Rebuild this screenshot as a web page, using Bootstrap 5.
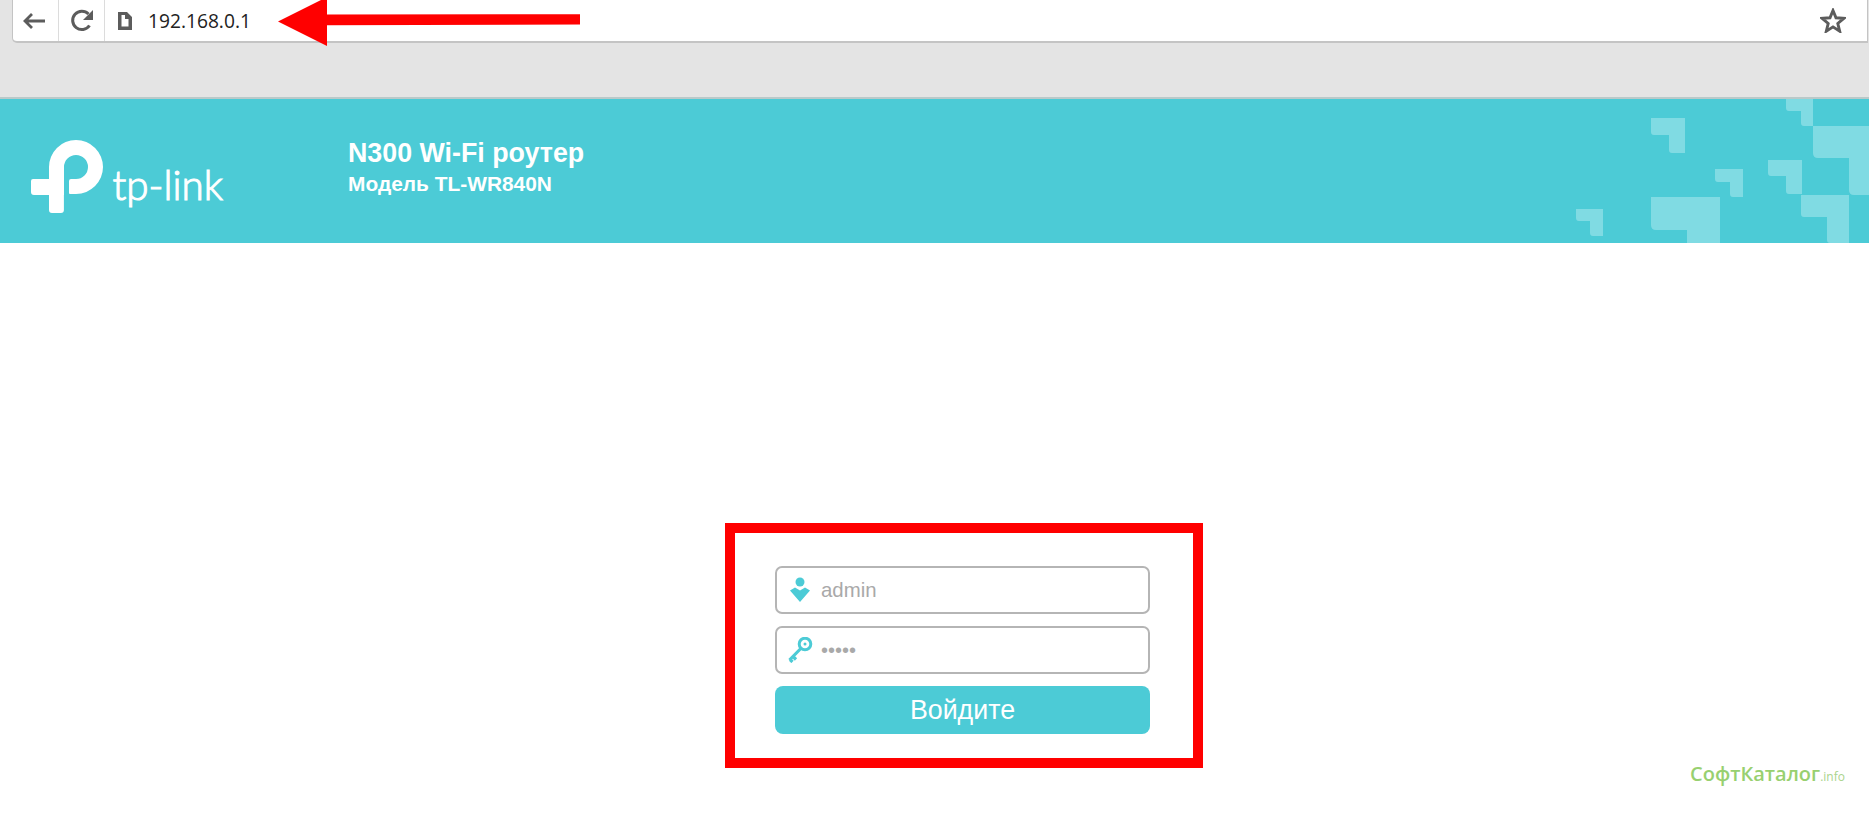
<!DOCTYPE html>
<html lang="ru">
<head>
<meta charset="utf-8">
<title>TP-Link</title>
<link href="https://cdn.jsdelivr.net/npm/bootstrap@5.3.0/dist/css/bootstrap.min.css" rel="stylesheet">
<style>
html,body{height:816px;overflow:hidden;background:#fff;font-family:"Liberation Sans",Arial,sans-serif}
.chrome-band{height:99px;background:#e4e4e4;border-bottom:2px solid #b9c9c9;padding-left:12px;padding-right:1px}
.addr-bar{height:43px;background:#fff;border:1px solid #c4c4c4;border-width:0 1px 2px 1px;border-radius:0 0 0 5px}
.tool-cell{width:46px;border-right:1px solid #dcdcdc}
.tool-cell svg{display:block}
.tool-back svg{margin-right:4px}
.addr-text{font-family:"Open Sans",sans-serif;font-size:19.2px;color:#222;margin-left:16px;line-height:41px}
.file-ico{margin-left:13px}
.star-ico{margin-right:21px}
.router-head{height:144px;background:#4ccbd6;color:#fff}
.head-pattern{position:absolute;right:0;top:0}
.brand-wrap{width:348px;padding-left:31px;padding-top:41px}
.brand-word{font-family:Lato,sans-serif;font-weight:300;font-size:40.4px;line-height:48px;margin-left:9.500px;margin-top:21px;-webkit-text-stroke:1.1px #fff}
.model-name{font-size:26.8px;font-weight:700;line-height:32px;margin-top:38px}
.model-sub{font-size:20.9px;font-weight:700;line-height:28px;margin-top:1px}
.red-frame{width:478px;height:245px;margin:280px 0 0 725px;border:10px solid #f00;padding:33px 40px 0 40px}
.field-box{width:375px;height:48px;border:2px solid #b5b5b5;border-radius:7px;margin-bottom:12px;color:#a9a9a9;font-size:20.4px;line-height:1}
.field-ico{width:44px;flex:none;padding-left:11px}
.dots-txt{font-size:20px}
.login-btn{width:375px;height:48px;background:#4ccbd6;border:0;border-radius:8px;color:#fff;font-size:26.8px;line-height:48px;padding:0}
.login-btn:hover{background:#4ccbd6;color:#fff}
.red-arrow{position:absolute;left:270px;top:0}
.soft-mark{position:absolute;left:1690px;top:760px;color:#98d070;font-family:"Open Sans",sans-serif;font-weight:600;font-size:20px;line-height:28px;white-space:nowrap}
.soft-mark small{font-size:12px;font-weight:400;color:#a9d48c}
</style>
</head>
<body class="position-relative">
<div class="chrome-band">
  <div class="addr-bar d-flex align-items-center">
    <div class="tool-cell tool-back h-100 d-flex align-items-center justify-content-center">
      <svg width="24" height="18" viewBox="0 0 24 18"><path d="M23 9H3M10 2 3 9l7 7" fill="none" stroke="#5c5c5c" stroke-width="2.8"/></svg>
    </div>
    <div class="tool-cell h-100 d-flex align-items-center justify-content-center">
      <svg width="24" height="24" viewBox="0 0 24 24"><path d="M19.5 16.5A9.2 9.2 0 1 1 18.5 5" fill="none" stroke="#5c5c5c" stroke-width="3"/><path d="M23 1v10h-10z" fill="#5c5c5c"/></svg>
    </div>
    <svg class="file-ico" width="14" height="18" viewBox="0 0 14 18"><path fill-rule="evenodd" d="M0 0h9l5 5v13H0zM3.5 7v7.5h7V7H7V3H3.500z" fill="#5c5c5c"/></svg>
    <span class="addr-text">192.168.0.1</span>
    <svg class="star-ico ms-auto" width="26" height="25" viewBox="0 0 26 25"><path d="M13 2.500l3 7.300 7.800.600-6 5.100 1.900 7.700L13 18.900 6.300 23.200l1.900-7.700-6-5.100 7.800-.600z" fill="none" stroke="#5c5c5c" stroke-width="2.900"/></svg>
  </div>
</div>

<header class="router-head position-relative d-flex">
  <svg class="head-pattern" width="293" height="144" viewBox="1576 99 293 144" fill="#80dbe3">
    <path d="M1786 99h27v27h-9q-3 0-3-3v-12h-12q-3 0-3-3z"/>
    <path d="M1813 126h56v69h-15q-5 0-5-5v-32h-31q-5 0-5-5z"/>
    <path d="M1651 118h34v35h-13q-3 0-3-3v-15h-15q-3 0-3-3z"/>
    <path d="M1768 160h34v34h-13q-3 0-3-3v-15h-15q-3 0-3-3z"/>
    <path d="M1715 169h28v28h-10q-3 0-3-3v-12h-12q-3 0-3-3z"/>
    <path d="M1801 195h48v48h-19q-3 0-3-3v-23h-23q-3 0-3-3z"/>
    <path d="M1651 197h69v46h-33v-13h-31q-5 0-5-5z"/>
    <path d="M1576 209h27v27h-10q-3 0-3-3v-12h-11q-3 0-3-3z"/>
  </svg>
  <div class="brand-wrap d-flex flex-none">
    <svg width="72" height="73" viewBox="0 0 72 73" class="flex-shrink-0"><path fill="#fff" d="M18 27A27 27 0 1 1 45 54h-6a1 1 0 0 1-1-1V41a2 2 0 0 1 2-2h5a12 12 0 1 0-12-12v28h-.1v15a3 3 0 0 1-3 3H21a3 3 0 0 1-3-3V55H3a3 3 0 0 1-3-3V41a2 2 0 0 1 2-2h16z"/></svg>
    <div class="brand-word">tp-link</div>
  </div>
  <div>
    <div class="model-name">N300 Wi-Fi роутер</div>
    <div class="model-sub">Модель TL-WR840N</div>
  </div>
</header>

<main class="red-frame">
  <div class="field-box d-flex align-items-center">
    <span class="field-ico d-flex">
      <svg width="24" height="26" viewBox="0 0 24 26"><circle cx="12" cy="5" r="4.500" fill="#4ccbd6"/><path d="M2 13.500 7 10.500l5 3 5-3 5 3L12 25z" fill="#4ccbd6"/></svg>
    </span>
    <span>admin</span>
  </div>
  <div class="field-box d-flex align-items-center">
    <span class="field-ico d-flex">
      <svg width="26" height="26" viewBox="0 0 26 26"><circle cx="17" cy="7" r="5.800" fill="none" stroke="#4ccbd6" stroke-width="3"/><circle cx="17" cy="7" r="1.500" fill="#4ccbd6"/><path d="M12.800 11.500 1.500 23M5 19.500l3 3M2 22.500l2.500 2.500" fill="none" stroke="#4ccbd6" stroke-width="3.200"/></svg>
    </span>
    <span class="dots-txt">•••••</span>
  </div>
  <button type="button" class="btn login-btn d-block">Войдите</button>
</main>

<svg class="red-arrow" width="320" height="48" viewBox="270 0 320 48"><path d="M278 21.500 327 -3V14.500l253-.3V24.500l-253 .8V46z" fill="#f00"/></svg>
<div class="soft-mark">СофтКаталог<small>.info</small></div>
</body>
</html>
